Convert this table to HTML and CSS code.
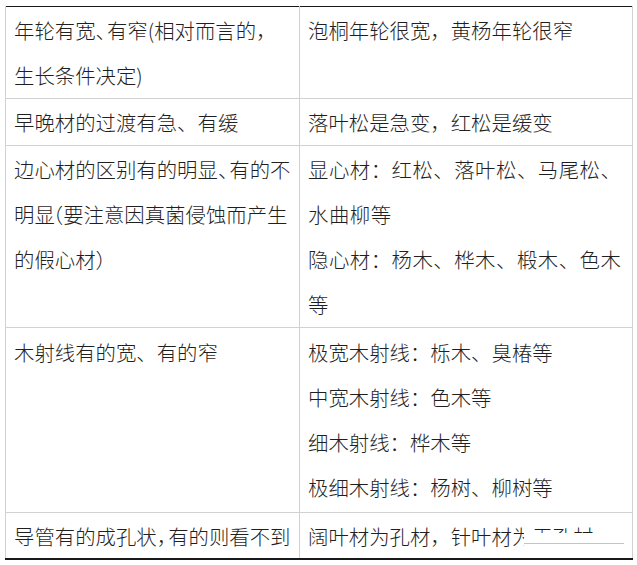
FILE: index.html
```html
<!DOCTYPE html>
<html lang="zh">
<head>
<meta charset="utf-8">
<link rel="stylesheet" href="styles.css">
</head>
<body>
<table class="wood">
  <colgroup><col class="c-left"><col class="c-right"></colgroup>
  <tr class="r1">
    <td>年轮有宽<span class="nar">、</span>有窄(相对而言的，<br>生长条件决定)</td>
    <td>泡桐年轮很宽，黄杨年轮很窄</td>
  </tr>
  <tr class="r2">
    <td>早晚材的过渡有急、有缓</td>
    <td>落叶松是急变，红松是缓变</td>
  </tr>
  <tr class="r3">
    <td>边心材的区别有的明显<span class="nar">、</span>有的不<br>明<span class="pre">显</span>（要注意因真菌侵蚀而产生<br>的假心材）</td>
    <td class="wide">显心材：红松、落叶松、马尾松、<br>水曲柳等<br>隐心材：杨木、桦木、椴木、色木<br>等</td>
  </tr>
  <tr class="r4">
    <td>木射线有的宽、有的窄</td>
    <td>极宽木射线：栎木、臭椿等<br>中宽木射线：色木等<br>细木射线：桦木等<br>极细木射线：杨树、柳树等</td>
  </tr>
  <tr class="r5">
    <td>导管有的成孔状<span class="nar">，</span>有的则看不到</td>
    <td class="last">阔叶材为孔材，针叶材为无孔材<span class="patch"></span></td>
  </tr>
</table>
</body>
</html>
```
FILE: styles.css
```css
html, body {
  margin: 0;
  padding: 0;
  background: #ffffff;
}
body {
  font-family: "Noto Sans CJK SC", "Noto Sans", sans-serif;
  color: #1f1f1f;
}
.wood {
  margin: 6px 0 0 5px;
  width: 627px;
  table-layout: fixed;
  border-collapse: collapse;
  border-top: 1px solid #1a1a1a;
  border-bottom: 2px solid #1a1a1a;
}
.c-left { width: 294px; }
.c-right { width: 333px; }
.wood td {
  border-left: 1px solid #d2d2d2;
  border-right: 1px solid #d2d2d2;
  border-bottom: 1px solid #d2d2d2;
  vertical-align: top;
  padding: 1px 0 0 8px;
  font-size: 20.4px;
  font-weight: 300;
  line-height: 45px;
  white-space: nowrap;
  overflow: visible;
}
.r4 td { padding-top: 2px; padding-bottom: 2px; }
.r5 td { border-bottom: none; line-height: 44px; }
.wide { letter-spacing: 0.5px; }
.nar { letter-spacing: -9px; }
.pre { letter-spacing: -12px; }
.last { position: relative; }
.patch {
  position: absolute;
  left: 224px;
  top: 20px;
  width: 100px;
  height: 10px;
  background: #ffffff;
  border-bottom: 1px solid #c4c4c4;
  box-shadow: 0 5px 0 #ffffff;
}
```
